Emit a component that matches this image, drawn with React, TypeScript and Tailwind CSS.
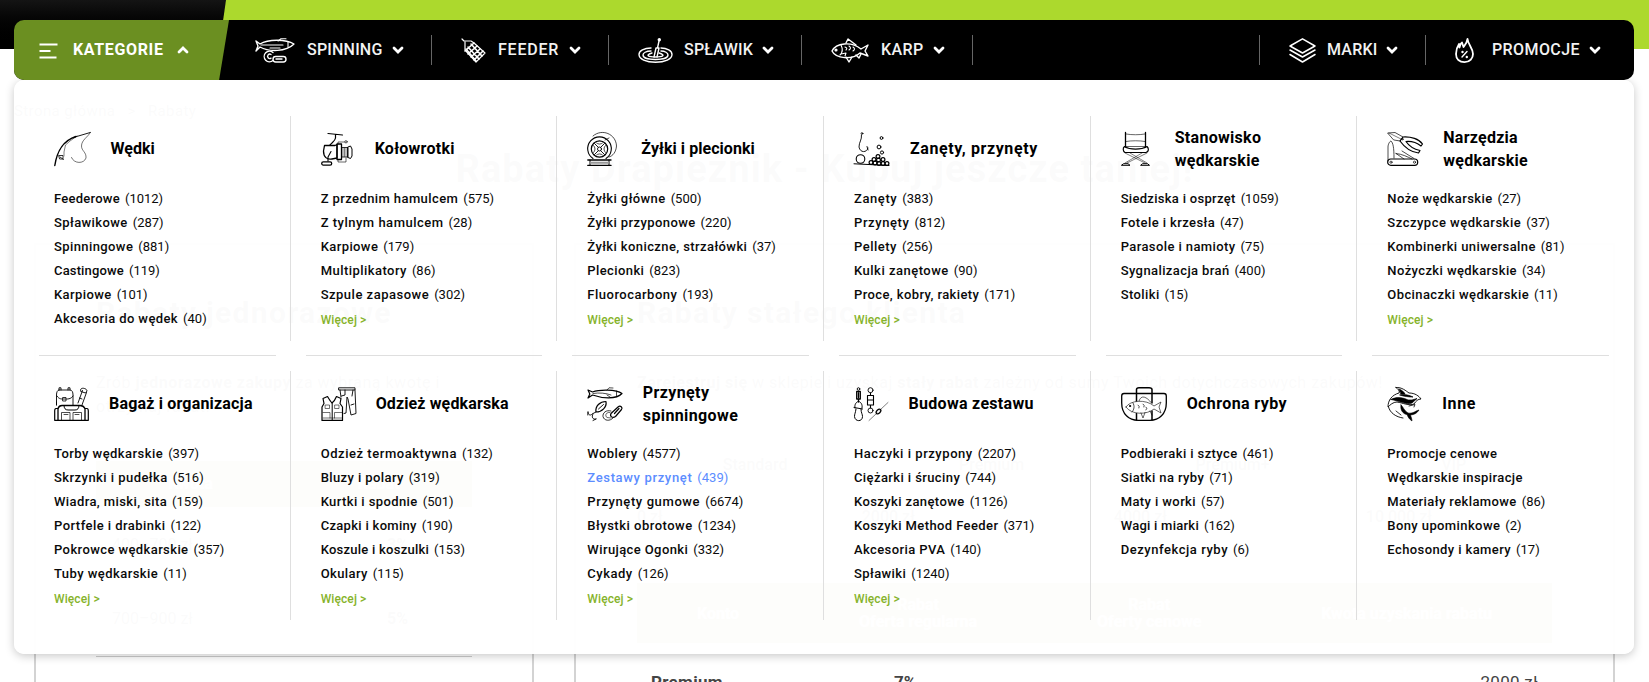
import React from "react";

type Entry = { label: string; count?: number; spacing: string; active?: boolean };
type Category = {
  title: string[];
  titleClass: string;
  iconBox: string;
  icon: React.ReactNode;
  items: Entry[];
  more?: boolean;
};

const e = (label: string, count?: number, spacing = "tracking-[0.4px]", active = false): Entry => ({ label, count, spacing, active });

const stroke = {
  fill: "none",
  stroke: "currentColor",
  strokeWidth: 1,
  strokeLinecap: "round" as const,
  strokeLinejoin: "round" as const,
};

function Svg({ w, h = 34, children }: { w: number; h?: number; children: React.ReactNode }) {
  return (
    <svg width={w} height={h} viewBox={`0 0 ${w} ${h}`} {...stroke} className="block shrink-0 overflow-visible">
      {children}
    </svg>
  );
}

const RodIcon = (
  <Svg w={37}>
    <path d="M.8 33.500C3 20 8 9 22 4.500" strokeWidth={1.4} />
    <path d="M20 5.300L36.300.500" strokeWidth={0.9} />
    <path d="M36.300.500C34 5 27.500 8 27.500 14C27.500 19 32.500 20 32 26C30 32 20 32 17.500 25.500" strokeWidth={0.55} />
    <path d="M10 24V20L11.500 13L16 9L23 4" strokeWidth={0.5} />
    <path d="M5 23.500H9V27H6ZM6 25L9.500 27.500" strokeWidth={0.8} />
  </Svg>
);
const ReelIcon = (
  <Svg w={32}>
    <path d="M7 1.500L21.500 3M14.500 2.500V6C14 9 11.500 10 9 13" strokeWidth={1.2} />
    <path d="M3.500 13.500H14L16 12.500V26L11 27C6 28 2.500 25 2.500 19Z" strokeWidth={1.3} />
    <path d="M16 12H20.500V27.500H16Z" strokeWidth={1.3} />
    <path d="M20.500 15.500H27V25H20.500" strokeWidth={0.8} />
    <path d="M22 16V24.500M23.500 16V24.500M25 16V24.500" strokeWidth={0.5} />
    <path d="M27 15L29.500 14L31 17V24L29.500 26.500L27 25.500Z" strokeWidth={1} />
    <path d="M17 12V10H24M17 28V30H25V26" strokeWidth={0.6} />
    <circle cx="25" cy="9.800" r="1.200" strokeWidth={0.6} />
    <path d="M10 19.500L7 25V29" strokeWidth={1.1} />
    <rect x="0.700" y="29.800" width="10" height="3.300" rx="1.600" strokeWidth={1.3} />
  </Svg>
);
const SpoolIcon = (
  <Svg w={30}>
    <path d="M19 26.500A11.800 11.800 0 1 0 6 26.500" strokeWidth={1.1} />
    <circle cx="12.500" cy="17" r="8.200" strokeWidth={1.2} />
    <circle cx="12.500" cy="17" r="2" strokeWidth={0.9} />
    <path d="M11 15L7.500 11.500M14 15L17.500 11.500M11 19L7.500 22.500M14 19L17.500 22.500" strokeWidth={0.9} />
    <path d="M6.500 13.500C8.500 15.500 8.500 18.500 6.500 20.500M18.500 13.500C16.500 15.500 16.500 18.500 18.500 20.500M9.500 11C11 12.500 14 12.500 15.500 11M9.500 23C11 21.500 14 21.500 15.500 23" strokeWidth={0.7} />
    <path d="M6 4C15-4 29 2 29.500 14C29 20 26 24 22 25M18 8L22 6" strokeWidth={0.7} />
    <path d="M.8 28H24M.8 33.400H24" strokeWidth={1.3} />
    <path d="M3 28V33M22 28V33" />
    <path d="M4 30.700H21" stroke="#999" strokeWidth={2} />
  </Svg>
);
const BaitIcon = (
  <Svg w={36}>
    <path d="M7.500 3C8 8 5 10 5 15C6 21 13 21 14 16M13 14.500L14 18" strokeWidth={0.9} />
    <circle cx="8" cy="1.500" r="0.900" strokeWidth={0.8} />
    <circle cx="6.500" cy="27" r="4.300" strokeWidth={1.1} />
    <path d="M0 31.800L35 33.500" />
    <circle cx="27.500" cy="6" r="1.400" />
    <circle cx="25" cy="15" r="1.900" />
    <circle cx="28" cy="20.500" r="1.600" />
    <g strokeWidth={1.2}>
      <circle cx="24" cy="24.500" r="1.900" /><circle cx="20" cy="27.500" r="1.900" /><circle cx="24.500" cy="28" r="1.900" />
      <circle cx="29" cy="27.500" r="1.900" /><circle cx="17" cy="30.500" r="1.900" /><circle cx="21" cy="31" r="1.900" />
      <circle cx="25" cy="31.500" r="1.900" /><circle cx="29" cy="31.500" r="1.900" /><circle cx="33" cy="31.500" r="1.900" />
    </g>
  </Svg>
);
const ChairIcon = (
  <Svg w={30}>
    <path d="M4.500.500V15M24.500.500V15" strokeWidth={1.3} />
    <path d="M5 2C10 3 19 3 24 2M5 9.500C10 8.500 19 8.500 24 9.500M5 14.500H24" strokeWidth={0.6} />
    <path d="M3.500 14.500C1.500 16 2 19.500 4 20.500H25C28 19.500 28 16.500 26 14.500C20 18 9 18 3.500 14.500Z" strokeWidth={1.2} />
    <path d="M4 21L24 31M26 21L6 31M9 21L26 31M21 21L4 31" strokeWidth={0.5} />
    <path d="M.8 33.300H9L7 31.700H3ZM20 33.300H28.500L26.500 31.700H22Z" strokeWidth={1} />
  </Svg>
);
const ToolsIcon = (
  <Svg w={36}>
    <path d="M1 1L8 .500L16 5L13 9L7 8Z" strokeWidth={0.7} />
    <path d="M2 1L14 7" strokeWidth={0.5} />
    <path d="M13 9L16 5C24 4.500 32 7 35.500 12L34 14C29 10 25 9 19 9.500C22 14 26 17 33 18.500L31.500 21C23 20 18 16 13 9Z" strokeWidth={1.2} />
    <circle cx="15.500" cy="7.200" r="0.700" strokeWidth={0.7} />
    <path d="M1 29V15C1 12 3 9 4 9C6 11 7 15 7 26M9 21.500C15 22 21 25 25 27M9 21.500L17 27M15 19L27 26.500" strokeWidth={0.7} />
    <rect x="0.700" y="27" width="30" height="6.300" rx="3.100" strokeWidth={1.2} />
    <circle cx="4" cy="30.200" r="1.100" strokeWidth={0.7} /><circle cx="27.500" cy="30.200" r="1.100" strokeWidth={0.7} />
  </Svg>
);
const BagIcon = (
  <Svg w={35}>
    <path d="M5 3V.800H7V3M14 3V.800H16V3M5 3H16C18 3 19 5 19 8V18M2.500 18V8C2.500 5 3.500 3 5 3M3 9C5 12.500 8 12 10.500 12S17 12.500 19 9" strokeWidth={0.9} />
    <path d="M9 10.500H12V14H9ZM2.500 15V18" strokeWidth={0.8} />
    <path d="M24 16L28.500 3.500M32.500 5.500L28 18M27 1.800C28 .300 33 1.500 33 4L31.500 6L27 4.500ZM25.500 11L28 12" strokeWidth={0.9} />
    <path d="M4 33.300V21.500Q5 18.500 8 18.500H26Q29.500 18.500 31 21.500V33.300Z" strokeWidth={1.3} />
    <path d="M10 18.500Q10 23 14 23H21Q25 23 25 18.500" strokeWidth={1} />
    <path d="M4 21.500H2Q.700 21.500.700 24V33.300H4M31 21.500H33Q34.300 21.500 34.300 24V33.300H31" strokeWidth={1.2} />
    <path d="M7.500 33V25.500H16V33M19 33V25.500H27.500V33M10 27.500H14M21 27.500H25" strokeWidth={0.7} />
  </Svg>
);
const ClothesIcon = (
  <Svg w={36}>
    <path d="M1 33.400V20L3 16.500L2 11.500L6.500 9.500C8 12 9.500 14.500 11 16C13 14.500 14.500 12 15.500 9.500L20 11.500L19 16.500L21.500 20V33.400Z" strokeWidth={1.2} />
    <path d="M11.200 16V33" strokeWidth={1} />
    <path d="M4.500 18H8.500V21.500H4.500ZM14 18H18V21.500H14ZM2 25.500H9V31M13.500 31V25.500H21M2 31H20.500" strokeWidth={0.55} />
    <path d="M18 .800H34V3H18ZM19 3L20 10M34 3L35 26.500L30 28L27 12L26 10L25 26L23 26.500M24 3V8L20.500 9M32 3L31 9M33 17L30 18" strokeWidth={0.9} />
  </Svg>
);
const LuresIcon = (
  <Svg w={36}>
    <path d="M1 3L5.500 5C12 2.500 29 2 35 6.500C29 13 14 11 5.500 8L1 11L2.800 7Z" strokeWidth={1.2} />
    <path d="M6 6.500C12 5.500 19 6 24 8M20 3L22 .800L26 1M29.500 4V9.500M20 8L23 10" strokeWidth={0.7} />
    <path d="M9 25C8 19 13 14.500 19 14.500C20 20 15 25 9 25Z" strokeWidth={1.2} />
    <path d="M11.500 22L16.500 17.500M1 25C1 28 3.500 29 5 27L9 25M1 25L.800 28M6 27C4 30 6 33 9 32M6 33.500L9 32" strokeWidth={0.9} />
    <path d="M24 24C19 22.500 15.500 26 16 29.500C17 34 23 34.500 26 31" strokeWidth={0.8} />
    <path d="M23 25.500C19 24.500 17.500 29 20 30.500L24 31" strokeWidth={0.6} />
    <path d="M24 26.500L31 20C33.500 18 36 20.500 34.500 22.500L28.500 29.500C25.500 31.500 22.500 29.500 24 26.500ZM27.500 26.500L32 21.500" strokeWidth={1.2} />
  </Svg>
);
const RigIcon = (
  <Svg w={34}>
    <circle cx="4.500" cy="2" r="1.300" strokeWidth={0.9} />
    <path d="M2.700 4.500H6.300V12H2.700ZM4.500 6V10.500M4.500 12V15" strokeWidth={1.3} />
    <path d="M1 21C0 17 3 14.500 4.500 14.500S9 17 8 21M0 20.500L8.500 22M2 22C1.500 26 .500 27 .500 29.500C1 35 8.500 35 8.500 29.500C8.500 27 7 26 7 22" strokeWidth={1} />
    <circle cx="16.500" cy="3.200" r="2.500" strokeWidth={0.9} />
    <path d="M16.500 5.700V8M13.500 8.500H19.500V18H13.500ZM13.500 13H19.500M16.500 18V21" strokeWidth={1.1} />
    <circle cx="16.500" cy="23.500" r="2.500" strokeWidth={0.9} />
    <path d="M34 15.500L26 23M23 26L15 33.500" strokeWidth={0.5} />
    <ellipse cx="24.500" cy="24.500" rx="2.800" ry="1.700" transform="rotate(-45 24.500 24.500)" strokeWidth={1.3} />
  </Svg>
);
const CradleIcon = (
  <Svg w={46}>
    <path d="M3 6.500H43Q45.300 6.500 45.300 9V16C45.300 27 38 33.400 29 33.400H17C8 33.400 .700 27 .700 16V9Q.700 6.500 3 6.500Z" strokeWidth={1.3} />
    <path d="M15.500 16V2.500Q15.500.700 18 .700H28Q31 .700 31 2.500V16M15.500 24V33M31 24V33" strokeWidth={1.5} />
    <path d="M5 20C9 13 25 12 33 19L40 15L38 20L40 26L33 22C26 28 10 28 5 20Z" fill="white" strokeWidth={0.6} />
    <path d="M18 14C20 7 26 10 30 15.500M20 26L22 31L24 25.500M29 24L31 28" strokeWidth={0.6} />
    <path d="M12 16C14 19 13 23 11 25M17 18Q19 19 18 21M22 17Q24 18 23 20M25 20Q27 21 25 23" strokeWidth={0.7} />
    <circle cx="9" cy="19" r="0.600" fill="currentColor" />
  </Svg>
);
const SharkIcon = (
  <Svg w={35}>
    <path d="M9 .500C15 0 19 4 22 6C28 6 32 9 34 12C31 12 29 14 27 17C22 19 16 16 10 15C6 15 3 18 1 20C1 13 5 8 12 6C13 4 11 2 9 .500Z" strokeWidth={0.9} />
    <path d="M4 12.500C10 9 17 11 21 13L25 13L30 11.500L25 16C19 18 13 14 4 12.500ZM13 8C18 7 22 8 26 10C22 10 17 9.500 13 8Z" fill="currentColor" strokeWidth={0.7} />
    <path d="M12 2C15 3 17 5 18 7H14Z" fill="currentColor" strokeWidth={0.7} />
    <path d="M1.500 20C3 26 9 30 16 31" strokeWidth={0.9} />
    <path d="M14 18C16 19 17 24 21 26C26 27 28 24 32 23C30 26 28 27.500 23.500 28C24 30 25 32 25 34C22 32 21 30 20 27.500C16 27 13 23 14 18Z" fill="currentColor" strokeWidth={0.6} />
    <path d="M22 19L28 17.500L27 20M9 24L14 28" strokeWidth={0.8} />
  </Svg>
);

const categories: Category[] = [
  {
    title: ["Wędki"], titleClass: "", iconBox: "w-[36.5px]", icon: RodIcon,
    items: [e("Feederowe", 1012, "tracking-[0.25px]"), e("Spławikowe", 287), e("Spinningowe", 881), e("Castingowe", 119, "tracking-[0.15px]"), e("Karpiowe", 101), e("Akcesoria do wędek", 40)],
  },
  {
    title: ["Kołowrotki"], titleClass: "tracking-[0.25px]", iconBox: "w-[34px]", icon: ReelIcon, more: true,
    items: [e("Z przednim hamulcem", 575), e("Z tylnym hamulcem", 28, "tracking-[0.5px]"), e("Karpiowe", 179), e("Multiplikatory", 86, "tracking-[0.45px]"), e("Szpule zapasowe", 302, "tracking-[0.5px]")],
  },
  {
    title: ["Żyłki i plecionki"], titleClass: "tracking-[0.05px]", iconBox: "w-[34px]", icon: SpoolIcon, more: true,
    items: [e("Żyłki główne", 500), e("Żyłki przyponowe", 220), e("Żyłki koniczne, strzałówki", 37), e("Plecionki", 823), e("Fluorocarbony", 193, "tracking-[0.5px]")],
  },
  {
    title: ["Zanęty, przynęty"], titleClass: "tracking-[0.6px]", iconBox: "w-[36px]", icon: BaitIcon, more: true,
    items: [e("Zanęty", 383, "tracking-[0.6px]"), e("Przynęty", 812, "tracking-[0.6px]"), e("Pellety", 256, "tracking-[0.5px]"), e("Kulki zanętowe", 90, "tracking-[0.5px]"), e("Proce, kobry, rakiety", 171)],
  },
  {
    title: ["Stanowisko", "wędkarskie"], titleClass: "tracking-[0.3px]", iconBox: "w-[34px]", icon: ChairIcon,
    items: [e("Siedziska i osprzęt", 1059, "tracking-[0.3px]"), e("Fotele i krzesła", 47), e("Parasole i namioty", 75), e("Sygnalizacja brań", 400), e("Stoliki", 15)],
  },
  {
    title: ["Narzędzia", "wędkarskie"], titleClass: "tracking-[0.25px]", iconBox: "w-[36px]", icon: ToolsIcon, more: true,
    items: [e("Noże wędkarskie", 27), e("Szczypce wędkarskie", 37, "tracking-[0.5px]"), e("Kombinerki uniwersalne", 81), e("Nożyczki wędkarskie", 34), e("Obcinaczki wędkarskie", 11)],
  },
  {
    title: ["Bagaż i organizacja"], titleClass: "tracking-[0.18px]", iconBox: "w-[35px]", icon: BagIcon, more: true,
    items: [e("Torby wędkarskie", 397, "tracking-[0.45px]"), e("Skrzynki i pudełka", 516, "tracking-[0.45px]"), e("Wiadra, miski, sita", 159), e("Portfele i drabinki", 122, "tracking-[0.45px]"), e("Pokrowce wędkarskie", 357), e("Tuby wędkarskie", 11, "tracking-[0.45px]")],
  },
  {
    title: ["Odzież wędkarska"], titleClass: "tracking-[0.13px]", iconBox: "w-[35px]", icon: ClothesIcon, more: true,
    items: [e("Odzież termoaktywna", 132, "tracking-[0.55px]"), e("Bluzy i polary", 319), e("Kurtki i spodnie", 501), e("Czapki i kominy", 190, "tracking-[0.3px]"), e("Koszule i koszulki", 153, "tracking-[0.25px]"), e("Okulary", 115)],
  },
  {
    title: ["Przynęty", "spinningowe"], titleClass: "tracking-[0.38px]", iconBox: "w-[35.5px]", icon: LuresIcon, more: true,
    items: [e("Woblery", 4577), e("Zestawy przynęt", 439, "tracking-[0.65px]", true), e("Przynęty gumowe", 6674, "tracking-[0.6px]"), e("Błystki obrotowe", 1234, "tracking-[0.5px]"), e("Wirujące Ogonki", 332), e("Cykady", 126, "tracking-[0.5px]")],
  },
  {
    title: ["Budowa zestawu"], titleClass: "tracking-[0.3px]", iconBox: "w-[34.5px]", icon: RigIcon, more: true,
    items: [e("Haczyki i przypony", 2207, "tracking-[0.55px]"), e("Ciężarki i śruciny", 744), e("Koszyki zanętowe", 1126), e("Koszyki Method Feeder", 371), e("Akcesoria PVA", 140), e("Spławiki", 1240)],
  },
  {
    title: ["Ochrona ryby"], titleClass: "tracking-[0.4px]", iconBox: "w-[46px]", icon: CradleIcon,
    items: [e("Podbieraki i sztyce", 461), e("Siatki na ryby", 71), e("Maty i worki", 57), e("Wagi i miarki", 162, "tracking-[0.25px]"), e("Dezynfekcja ryby", 6, "tracking-[0.55px]")],
  },
  {
    title: ["Inne"], titleClass: "tracking-[0.6px]", iconBox: "w-[35px]", icon: SharkIcon,
    items: [e("Promocje cenowe"), e("Wędkarskie inspiracje"), e("Materiały reklamowe", 86), e("Bony upominkowe", 2), e("Echosondy i kamery", 17)],
  },
];

function Cell({ cat, i }: { cat: Category; i: number }) {
  const top = i < 6;
  const last = i % 6 === 5;
  return (
    <div>
      <div className={`mt-[15px] pl-[30px] pt-[11px] ${top ? "h-[225px]" : "h-[249px]"} ${last ? "" : "border-r border-[#dfdfdf]"}`}>
        <div className="flex h-11 items-center gap-5">
          <div className={`shrink-0 ${cat.iconBox}`}>{cat.icon}</div>
          <h3 className={`text-base font-bold leading-[23px] ${cat.title.length === 1 ? "relative -top-px" : ""} ${cat.titleClass}`}>
            {cat.title.map((t) => <span key={t} className="block whitespace-nowrap">{t}</span>)}
          </h3>
        </div>
        <ul className="mt-4 text-[13px] leading-6">
          {cat.items.map((it) => (
            <li key={it.label} className={`flex gap-[5px] whitespace-nowrap ${it.active ? "text-[#5c8dff]" : "text-[#0a0a0a]"}`}>
              <span className={`font-medium ${it.spacing}`}>{it.label}</span>
              {it.count !== undefined && <span>({it.count})</span>}
            </li>
          ))}
          {cat.more && <li className="mt-px text-xs font-medium leading-6 tracking-[0.1px] text-[#86b32b]">Więcej &gt;</li>}
        </ul>
      </div>
      {top && <div className="mx-[15px] mt-[14px] h-px bg-[#dfdfdf]" />}
    </div>
  );
}

function Chevron({ up = false }: { up?: boolean }) {
  return (
    <svg width="12" height="8" viewBox="0 0 12 8" fill="none" stroke="white" strokeWidth="2.8" className={up ? "rotate-180" : ""}>
      <path d="M2 2L6 6L10 2" strokeLinecap="round" />
    </svg>
  );
}

const NavLure = (
  <Svg w={40} h={25}>
    <g strokeWidth={1.4}>
      <path d="M1 3L5 6C13 1 31 1 39 6C31 14 14 14 5 9L1 13L3 8Z" />
      <path d="M6 7H28M23 3L26 .700H31M33 4V9M15 10H25" strokeWidth={1.1} />
      <path d="M18 14.500A5.300 5.300 0 1 0 18 22.500" /><path d="M16 16.500A2.200 2.200 0 1 0 16 20.200" />
      <rect x="18" y="18.500" width="13" height="5.500" rx="2.700" /><path d="M21 21H27" />
    </g>
  </Svg>
);
const NavFeeder = (
  <Svg w={26} h={25}>
    <g strokeWidth={1.2}>
      <path d="M1 1L3 3H10L13 5L24 15L15 24L4 12V4" />
      <path d="M13 5L4 13M16 8L7 16M19 11L10 19M22 13L13 22M10 6L21 18M7 9L18 21M5 11L15 23" strokeWidth={1.6} />
    </g>
  </Svg>
);
const NavFloat = (
  <Svg w={35} h={25}>
    <g strokeWidth={1.4}>
      <path d="M13 10C6 10 1 13 1 16.500C1 21 8 24.200 17.500 24.200S34 21 34 16.500C34 13 29 10 23 10" />
      <path d="M13 13C8 13 5 15 5 17C5 20 11 21.500 17.500 21.500S30 20 30 17C30 15 27 13 23 13M14 15C7 17 10 19 17.500 19S28 17 21 15" />
      <path d="M16 19L18 10L21 10L19 19M19.500 10L21 3" />
      <circle cx="21.300" cy="1.800" r="1" fill="white" />
    </g>
  </Svg>
);
const NavCarp = (
  <Svg w={38} h={25}>
    <g strokeWidth={1.4}>
      <path d="M1 13C5 5 20 3 30 11L37 7L34 13L37 18L29 15C21 22 5 21 1 13Z" />
      <path d="M15 5L17 1L25 7M15 19L18 24L21 19M25 17L28 20L30 16" />
      <path d="M10 7C12 11 11 15 9 17M10 16L15 15L14 18M14 9Q17 10 15 12M18 8Q21 10 18 12M22 9Q25 11 22 13" strokeWidth={1.1} />
      <circle cx="5" cy="12" r="0.900" fill="white" />
    </g>
  </Svg>
);
const NavLayers = (
  <Svg w={27} h={25}>
    <g strokeWidth={1.5}>
      <path d="M13.500.800L26 8L13.500 15L1 8ZM1 12L13.500 19L26 12M1 16.500L13.500 24L26 16.500" />
    </g>
  </Svg>
);
const NavFlame = (
  <Svg w={19} h={25}>
    <g strokeWidth={1.8}>
      <path d="M12.500.800C12 5 10 7 8.500 9L7 4.500C5 6 5 8 4.500 9.500L4 6C2 9 1 12 1 16C1 21 4.500 24.200 9.500 24.200C15 24.200 18 20 18 16C18 10 13 7 12.500.800Z" />
      <path d="M7 19L12 13.500" strokeWidth={1.4} /><circle cx="7.500" cy="14" r="0.600" strokeWidth={1.2} /><circle cx="11.800" cy="19" r="0.600" strokeWidth={1.2} />
    </g>
  </Svg>
);

function NavItem({ icon, label, width, text, iconBox, tracking }: { icon: React.ReactNode; label: string; width: string; text: string; iconBox: string; tracking: string }) {
  return (
    <div className={`flex h-[30px] items-center pl-[29px] ${width}`}>
      <div className={`shrink-0 text-white ${iconBox}`}>{icon}</div>
      <span className={`shrink-0 whitespace-nowrap text-base font-medium text-[#f2f2f2] ${text} ${tracking}`}>{label}</span>
      <Chevron />
    </div>
  );
}

function NavBar() {
  return (
    <nav className="mx-[14px] flex h-[60px] w-[1620px] items-center overflow-hidden rounded-[10px] bg-black">
      <div className="flex h-full w-[215px] shrink-0 items-center bg-[#6b8f21] pl-[25px] [clip-path:polygon(0_0,100%_0,95.4%_100%,0_100%)]">
        <svg width="19" height="16" viewBox="0 0 19 16" stroke="white" strokeWidth="2" className="mt-px">
          <path d="M.500 1.500H18.500M.500 8H11.500M.500 14.500H17.500" />
        </svg>
        <span className="ml-[15px] w-[104px] text-base font-bold tracking-[0.65px] text-white">KATEGORIE</span>
        <Chevron up />
      </div>
      <div className="ml-[-3px] flex">
        <NavItem icon={NavLure} label="SPINNING" iconBox="w-[52px]" text="w-[85px]" width="w-[206px] border-r border-[#666]" tracking="tracking-[0.2px]" />
        <NavItem icon={NavFeeder} label="FEEDER" iconBox="w-[37px]" text="w-[71px]" width="w-[177px] border-r border-[#666]" tracking="tracking-[0.8px]" />
        <NavItem icon={NavFloat} label="SPŁAWIK" iconBox="w-[46px]" text="w-[78px]" width="w-[193px] border-r border-[#666]" tracking="tracking-[0.2px]" />
        <NavItem icon={NavCarp} label="KARP" iconBox="w-[50px]" text="w-[52px]" width="w-[171px] border-r border-[#666]" tracking="tracking-[0.4px]" />
      </div>
      <div className="ml-auto flex">
        <NavItem icon={NavLayers} label="MARKI" iconBox="w-[38px]" text="w-[59px]" width="w-[167px] border-x border-[#666]" tracking="tracking-[0.2px]" />
        <NavItem icon={NavFlame} label="PROMOCJE" iconBox="w-[37px]" text="w-[97px]" width="w-[208px]" tracking="tracking-[0.4px]" />
      </div>
    </nav>
  );
}

function PageBehind() {
  return (
    <main className="h-[633px] overflow-hidden bg-white text-[#333]">
      <div className="h-[120px] px-[14px] pt-[50px] text-[15px] leading-6 tracking-[0.4px]">Strona główna <span className="px-2">&gt;</span> Rabaty</div>
      <h1 className="-mt-[24px] h-[98px] text-center text-[38px] font-bold leading-[48px] tracking-[1.1px]">Rabaty Drapieżnik - Kupuj jeszcze taniej!</h1>
      <div className="flex items-start gap-10 pl-[34px]">
        <section className="h-[600px] w-[500px] border-2 border-[#d3d3d3] px-[60px] pt-[52px]">
          <h2 className="text-[30px] font-bold leading-8 tracking-[1.3px]">Rabaty jednorazowe</h2>
          <p className="mt-[42px] h-[90px] whitespace-nowrap text-base leading-6 tracking-[0.5px]">Zrób <b>jednorazowe zakupy</b> za wybraną kwotę i<br />otrzymaj rabat!</p>
          <div className="flex h-[46px] items-center justify-around bg-[#a89a55] font-bold text-white"><span>Kwota</span><span>Rabat</span></div>
          <div className="flex h-[75px] items-center justify-between pl-4 pr-16"><span>400–700 zł</span><b>3%</b></div>
          <div className="flex h-[75px] items-center justify-between border-b border-[#ccc] pl-4 pr-16"><span>700–900 zł</span><b>5%</b></div>
        </section>
        <section className="h-[600px] w-[1041px] border-2 border-[#d3d3d3] px-[61px] pt-[52px]">
          <h2 className="text-[30px] font-bold leading-8 tracking-[1.3px]">Rabaty stałego klienta</h2>
          <p className="mt-[42px] h-[82px] whitespace-nowrap text-base leading-6 tracking-[0.5px]"><b>Zarejestruj się</b> w sklepie i uzyskaj <b>stały rabat</b> zależny od sumy Twoich dotychczasowych zakupów!</p>
          <div className="flex h-6 justify-around font-medium"><span>Standard</span><span>Premium</span><span>Premium+</span><span>VIP</span></div>
          <div className="mt-7 flex h-[78px] justify-between pr-[120px] font-medium"><span>0 zł</span><span>2000 zł</span><span>4000 zł</span><span>10 000 zł</span></div>
          <div className="flex h-[60px] items-center justify-around bg-[#a89a55] text-center font-bold leading-[17px] text-white"><span>Konto</span><span>Rabat<br />Oferta regularna</span><span>Rabat<br />Oferty cenowe</span><span>Kwota uzyskania rabatu</span></div>
          <div className="flex h-[80px] items-center pl-[14px] text-[17px] text-[#444]">
            <b className="w-[243px] tracking-[0.3px]">Premium</b><b className="w-[235px]">7%</b><b className="flex-1">-</b><span className="pr-[14px] tracking-[0.3px]">2000 zł</span>
          </div>
        </section>
      </div>
    </main>
  );
}

export default function App() {
  return (
    <div className="relative h-[682px] w-[1649px] overflow-hidden bg-white font-['Roboto','Noto_Sans',sans-serif]">
      <div className="h-[49px] bg-[#acd92d]">
        <div className="h-full w-[226px] bg-linear-to-b from-[#141414] to-black [clip-path:polygon(0_0,100%_0,96.900%_100%,0_100%)]" />
      </div>
      <PageBehind />
      <div className="absolute inset-x-0 top-5">
        <NavBar />
        <div className="mx-[14px] h-[574px] w-[1620px] rounded-[10px] bg-white/98 pt-[21px] pl-[10px] shadow-[0_2px_10px_rgba(0,0,0,0.22)]">
          <div className="grid w-[1600px] grid-cols-6 text-black">
            {categories.map((c, i) => <Cell key={c.title[0]} cat={c} i={i} />)}
          </div>
        </div>
      </div>
    </div>
  );
}
